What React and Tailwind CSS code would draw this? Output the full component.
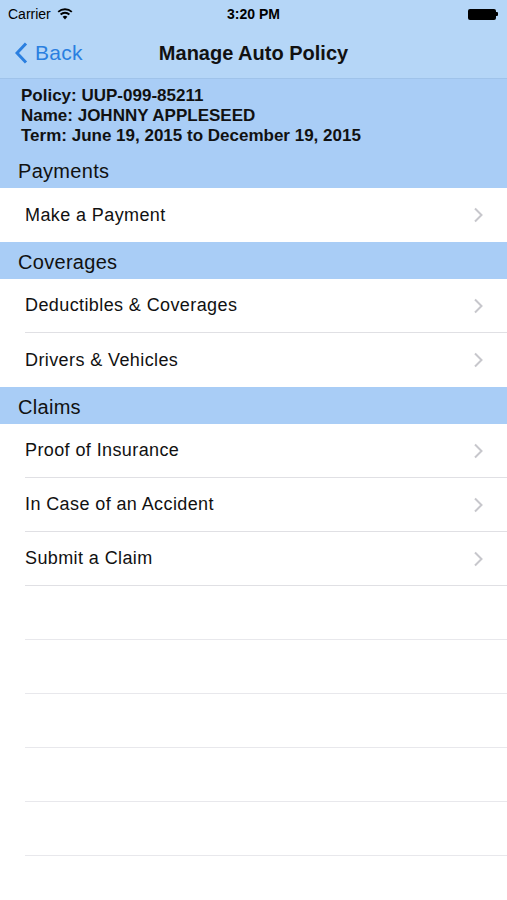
import React from 'react';

const font = { fontFamily: '"Liberation Sans", Arial, sans-serif' };

const Chevron = () => (
  <svg width="10" height="16" viewBox="0 0 10 16" className="shrink-0">
    <path d="M2 1.5 L8.5 8 L2 14.5" fill="none" stroke="#c7c7cc" strokeWidth="2" />
  </svg>
);

const Row = ({ label, last }) => (
  <div className="flex items-center h-[54px] pl-[25px] bg-white">
    <div className={`flex items-center justify-between h-full flex-1 pr-[24px] ${last ? '' : 'border-b border-[#e0e0e4]'}`}>
      <span className="text-[18px] tracking-[0.4px] text-[#111]">{label}</span>
      <Chevron />
    </div>
  </div>
);

const SectionHeader = ({ title }) => (
  <div className="h-[37px] flex items-center pt-[2px] px-[18px] bg-[#a9cdf6] text-[20px] tracking-[0.3px] text-[#111]">
    {title}
  </div>
);

export default function App() {
  return (
    <div className="w-[507px] h-[900px] bg-white overflow-hidden" style={font}>
      {/* status bar + nav */}
      <div className="bg-[#b5d6f7] border-b border-[#9fc3ea]">
        <div className="h-[28px] flex items-center justify-between px-[8px] text-[14px] text-black">
          <div className="flex items-center gap-[6px] w-[120px]">
            <span>Carrier</span>
            <svg width="16" height="12" viewBox="0 0 16 12">
              <path d="M8 11.5 L5.6 8.7 A3.6 3.6 0 0 1 10.4 8.7 Z" fill="#000" />
              <path d="M3.6 6.5 A6.4 6.4 0 0 1 12.4 6.5" fill="none" stroke="#000" strokeWidth="1.8" />
              <path d="M1.2 3.9 A10 10 0 0 1 14.8 3.9" fill="none" stroke="#000" strokeWidth="1.8" />
            </svg>
          </div>
          <span className="font-bold">3:20 PM</span>
          <div className="w-[120px] flex justify-end items-center pr-[1px]">
            <div className="w-[28px] h-[11px] bg-black rounded-[2px]" />
            <div className="w-[2px] h-[4px] bg-black rounded-r-[1px]" />
          </div>
        </div>
        <div className="h-[50px] flex items-center relative">
          <div className="flex items-center gap-[7px] pl-[15px] text-[#2a7fe0] text-[21px] tracking-[0.3px]">
            <svg width="13" height="22" viewBox="0 0 13 22">
              <path d="M11 1.5 L2 11 L11 20.5" fill="none" stroke="#2a7fe0" strokeWidth="3" />
            </svg>
            <span>Back</span>
          </div>
          <div className="absolute left-0 right-0 text-center font-bold text-[20px] text-[#111] pointer-events-none">
            Manage Auto Policy
          </div>
        </div>
      </div>

      {/* policy info */}
      <div className="bg-[#a9cdf6] pt-[7px] pb-[5px] px-[21px] text-[17px] font-bold leading-[20px] text-[#111]">
        <div>Policy: UUP-099-85211</div>
        <div>Name: JOHNNY APPLESEED</div>
        <div>Term: June 19, 2015 to December 19, 2015</div>
      </div>
      <SectionHeader title="Payments" />
      <Row label="Make a Payment" last />

      <SectionHeader title="Coverages" />
      <Row label="Deductibles & Coverages" />
      <Row label="Drivers & Vehicles" last />

      <SectionHeader title="Claims" />
      <Row label="Proof of Insurance" />
      <Row label="In Case of an Accident" />
      <Row label="Submit a Claim" />

      {/* empty rows */}
      {[0, 1, 2, 3, 4, 5].map((i) => (
        <div key={i} className="h-[54px] ml-[25px] border-b border-[#e8e8ec]" />
      ))}
    </div>
  );
}
